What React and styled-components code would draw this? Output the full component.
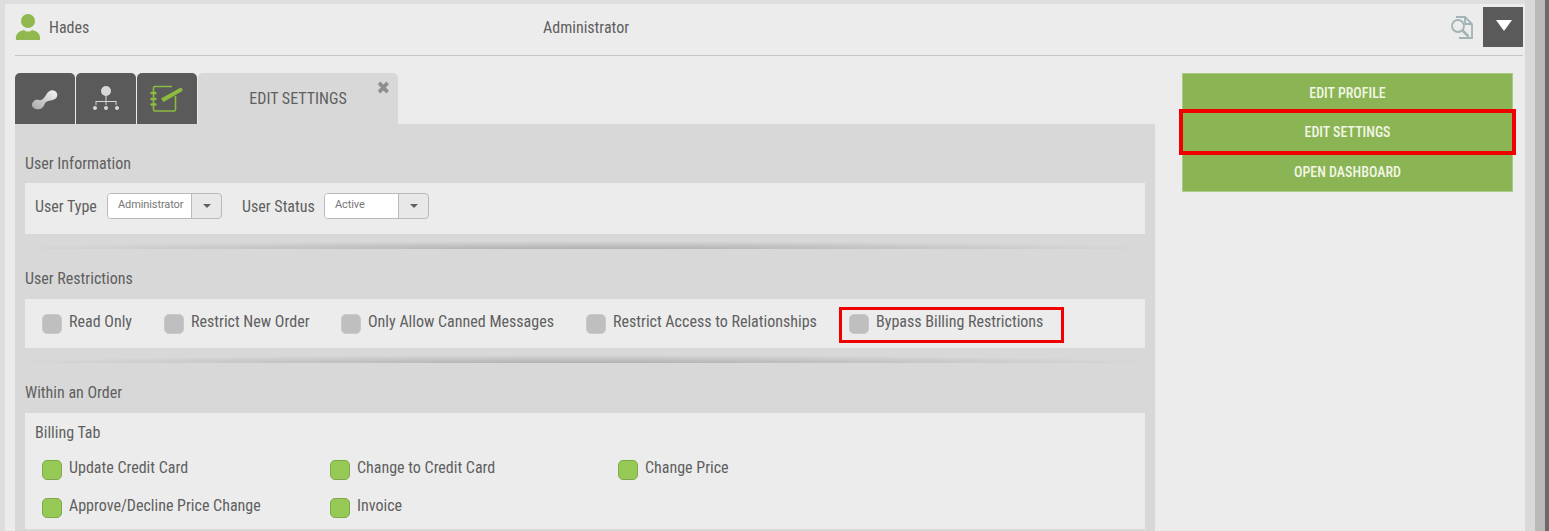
import React from 'react';
import styled, { createGlobalStyle } from 'styled-components';

const GlobalStyle = createGlobalStyle`
  html, body {
    margin: 0;
    padding: 0;
    height: 531px;
    overflow: hidden;
    background: #dedede;
  }
  * {
    box-sizing: border-box;
  }
`;

const Page = styled.div`
  width: 1549px;
  height: 531px;
  overflow: hidden;
  display: flex;
  padding-top: 4px;
  padding-left: 5px;
  background: #dedede;
  font-family: Roboto, "Liberation Sans", sans-serif;
  font-stretch: 75%;
  color: #5f5f5f;
`;

const Main = styled.div`
  width: 1520px;
  flex: none;
  padding: 0 10px;
  background: #ececec;
`;

const Gutter = styled.div`
  width: 10px;
  flex: none;
  background: #d9d9d9;
  margin-top: -4px;
`;

const Scrollbar = styled.div`
  flex: 1;
  margin-top: -4px;
  background: #6a6a6a;
  border-left: 10px solid #b9b9b9;
`;

const TopBar = styled.div`
  height: 52px;
  margin-right: -8px;
  padding-bottom: 6px;
  display: flex;
  align-items: center;
  border-bottom: 1px solid #c6c6c6;
`;

const UserName = styled.div`
  font-size: 16px;
  margin: 1px 0 0 8px;
  width: 494px;
`;

const Role = styled.div`
  font-size: 16px;
  margin-top: 1px;
  flex: 1;
`;

const DocIcon = styled.svg`
  width: 24px;
  height: 24px;
  margin-right: 9px;
  margin-top: 1px;
`;

const MenuButton = styled.div`
  width: 40px;
  height: 40px;
  background: #5a5a5a;
  display: flex;
  align-items: center;
  justify-content: center;
  padding-bottom: 2px;
`;

const Triangle = styled.div`
  width: 0;
  height: 0;
  margin-left: 2px;
  border-left: 8px solid transparent;
  border-right: 8px solid transparent;
  border-top: 11px solid #fff;
`;

const Columns = styled.div`
  display: flex;
  align-items: flex-start;
  padding-top: 17px;
`;

const Content = styled.div`
  width: 1140px;
  flex: none;
`;

const Tabs = styled.div`
  display: flex;
  height: 51px;
`;

const IconTab = styled.div`
  width: 60px;
  margin-right: 1px;
  background: #5a5a5a;
  border-radius: 5px 5px 0 0;
  display: flex;
  align-items: center;
  justify-content: center;
`;

const ActiveTab = styled.div`
  width: 200px;
  background: #d8d8d8;
  border-radius: 5px 5px 0 0;
  position: relative;
  display: flex;
  align-items: center;
  justify-content: center;
  font-size: 16px;
  padding-bottom: 1px;
`;

const CloseMark = styled.span`
  position: absolute;
  top: 5px;
  right: 8px;
  font-size: 18px;
  font-weight: 700;
  line-height: 20px;
  color: #8e8e8e;
  font-family: "DejaVu Sans", sans-serif;
`;

const Panel = styled.div`
  background: #d8d8d8;
  padding: 0 10px;
  height: 420px;
`;

const SectionTitle = styled.div`
  font-size: 16px;
  line-height: 18px;
  padding-top: ${({ top }) => top}px;
  padding-bottom: ${({ bottom }) => bottom || 11}px;
`;

const Card = styled.div`
  background: #ececec;
  height: ${({ h }) => h}px;
`;

const FieldRow = styled.div`
  height: 100%;
  display: flex;
  align-items: center;
  padding: 0 0 5px 10px;
  font-size: 16px;
`;

const Field = styled.div`
  display: flex;
  align-items: center;
  margin-right: 20px;
`;

const FieldLabel = styled.span`
  width: ${({ w }) => w}px;
  white-space: nowrap;
`;

const Select = styled.div`
  width: ${({ w }) => w}px;
  height: 26px;
  border: 1px solid #b9b9b9;
  border-radius: 4px;
  display: flex;
  background: #e8e8e8;
  overflow: hidden;
`;

const SelectValue = styled.div`
  flex: 1;
  background: #fff;
  border-right: 1px solid #b9b9b9;
  font-size: 11px;
  font-stretch: 100%;
  letter-spacing: -0.1px;
  line-height: 22px;
  padding-left: 10px;
  color: #777;
`;

const SelectArrow = styled.div`
  width: 29px;
  display: flex;
  align-items: center;
  justify-content: center;
  &::after {
    content: '';
    border-left: 4px solid transparent;
    border-right: 4px solid transparent;
    border-top: 4px solid #5f5f5f;
  }
`;

const Divider = styled.div`
  height: 15px;
  background: radial-gradient(ellipse 52% 8px at 50% 100%, #b0b0b0 0%, #c4c4c4 50%, rgba(216, 216, 216, 0) 100%);
`;

const CheckRow = styled.div`
  display: flex;
  align-items: center;
  height: 100%;
  padding-left: 17px;
`;

const Check = styled.label`
  display: flex;
  align-items: flex-start;
  font-size: 16px;
  line-height: 18px;
  position: relative;
  width: ${({ w }) => (w ? `${w}px` : 'auto')};
  white-space: nowrap;
`;

const Box = styled.span`
  width: 20px;
  height: 20px;
  flex: none;
  margin: 1px 7px 0 0;
  border-radius: 5px;
  background: ${({ on }) => (on ? '#97c957' : '#bfbfbf')};
  border: 1px solid ${({ on }) => (on ? '#7fa84a' : '#c9c9c9')};
`;

const Highlight = styled.div`
  position: absolute;
  top: -6px;
  left: -10px;
  width: 225px;
  height: 36px;
  border: 3px solid #f00000;
`;

const SubTitle = styled.div`
  font-size: 16px;
  line-height: 18px;
  padding: 11px 0 0 10px;
`;

const CheckGrid = styled.div`
  display: grid;
  grid-template-columns: 288px 288px 288px;
  grid-auto-rows: 38px;
  padding: 17px 0 0 17px;
`;

const Side = styled.div`
  margin-left: 27px;
  width: 331px;
  display: flex;
  flex-direction: column;
`;

const SideButton = styled.div`
  height: 39.67px;
  position: relative;
  display: flex;
  align-items: center;
  justify-content: center;
  background: #8bb554;
  border: 1px solid #a9cb85;
  border-top-width: ${({ joined }) => (joined ? 0 : 1)}px;
  color: #f1f6e6;
  font-size: 14px;
  font-weight: 500;
`;

const SideHighlight = styled.div`
  position: absolute;
  z-index: 1;
  top: -4px;
  left: -4px;
  right: -4px;
  bottom: -4px;
  border: 4px solid #f00000;
`;

function UserIcon() {
  return (
    <svg width="26" height="28" viewBox="0 0 26 28">
      <circle cx="13" cy="8" r="7" fill="#8fb84f" />
      <path d="M1 27c-1-7 4-9 8-10 2 2 6 2 8 0 4 1 9 3 8 10z" fill="#8fb84f" />
    </svg>
  );
}

function LinkIcon() {
  return (
    <svg width="30" height="24" viewBox="0 0 30 24">
      <defs>
        <linearGradient id="blob" x1="0" y1="1" x2="1" y2="0">
          <stop offset="0" stopColor="#a8a8a8" />
          <stop offset="1" stopColor="#f6f6f6" />
        </linearGradient>
      </defs>
      <path
        d="M2 18c0-4 4-6 7-5 3 1 5-2 7-5 2-4 6-6 9-4 3 2 3 6 0 8-3 2-6 1-9 3-2 2-2 6-6 7-4 1-8-1-8-4z"
        fill="url(#blob)"
      />
    </svg>
  );
}

function TreeIcon() {
  return (
    <svg width="28" height="28" viewBox="0 0 28 28" fill="#d8d8d8">
      <circle cx="14" cy="6" r="5" />
      <path d="M13.500 10h1v6h10v4h-1v-3h-9v3h-1v-3h-9v3h-1v-4h10z" />
      <circle cx="3" cy="23" r="2" />
      <circle cx="14" cy="23" r="2" />
      <circle cx="25" cy="23" r="2" />
    </svg>
  );
}

function NotebookIcon() {
  return (
    <svg width="34" height="28" viewBox="0 0 34 28" fill="none" stroke="#8cbc3f" strokeWidth="1.600">
      <path d="M22 1.500H5a1.500 1.500 0 0 0-1.500 1.500v21.500a1.500 1.500 0 0 0 1.500 1.500h19a1.500 1.500 0 0 0 1.500-1.500V11" />
      <path d="M1.500 8h4M1.500 14h4M1.500 19.500h4" strokeWidth="2.400" strokeLinecap="round" />
      <path d="M11 13.500l2.500 3.500 18-10.500c2-1.500 1-4-1.500-3.500z" fill="#8cbc3f" stroke="none" />
    </svg>
  );
}

function SearchDocIcon() {
  return (
    <DocIcon viewBox="0 0 24 24" fill="none" stroke="#a3b3b5" strokeWidth="1.800">
      <path d="M6 2h9l7 7v14H9" />
      <path d="M15 2v7h7" />
      <circle cx="8" cy="11" r="6" fill="#ececec" />
      <path d="M12.500 15.500l6 6" strokeWidth="2.600" />
    </DocIcon>
  );
}

function CheckItem({ on, label, w, children }) {
  return (
    <Check w={w}>
      <Box on={on} />
      {label}
      {children}
    </Check>
  );
}

const billing = [
  'Update Credit Card',
  'Change to Credit Card',
  'Change Price',
  'Approve/Decline Price Change',
  'Invoice',
];

export default function App() {
  return (
    <Page>
      <GlobalStyle />
      <Main>
        <TopBar>
          <UserIcon />
          <UserName>Hades</UserName>
          <Role>Administrator</Role>
          <SearchDocIcon />
          <MenuButton>
            <Triangle />
          </MenuButton>
        </TopBar>
        <Columns>
          <Content>
            <Tabs>
              <IconTab><LinkIcon /></IconTab>
              <IconTab><TreeIcon /></IconTab>
              <IconTab><NotebookIcon /></IconTab>
              <ActiveTab>
                EDIT SETTINGS
                <CloseMark>✖</CloseMark>
              </ActiveTab>
            </Tabs>
            <Panel>
              <SectionTitle top={31} bottom={10}>User Information</SectionTitle>
              <Card h={51}>
                <FieldRow>
                  <Field>
                    <FieldLabel w={72}>User Type</FieldLabel>
                    <Select w={115}>
                      <SelectValue>Administrator</SelectValue>
                      <SelectArrow />
                    </Select>
                  </Field>
                  <Field>
                    <FieldLabel w={82}>User Status</FieldLabel>
                    <Select w={105}>
                      <SelectValue>Active</SelectValue>
                      <SelectArrow />
                    </Select>
                  </Field>
                </FieldRow>
              </Card>
              <Divider />
              <SectionTitle top={21}>User Restrictions</SectionTitle>
              <Card h={49}>
                <CheckRow>
                  <CheckItem label="Read Only" w={122} />
                  <CheckItem label="Restrict New Order" w={177} />
                  <CheckItem label="Only Allow Canned Messages" w={245} />
                  <CheckItem label="Restrict Access to Relationships" w={263} />
                  <CheckItem label="Bypass Billing Restrictions">
                    <Highlight />
                  </CheckItem>
                </CheckRow>
              </Card>
              <Divider />
              <SectionTitle top={21}>Within an Order</SectionTitle>
              <Card h={116}>
                <SubTitle>Billing Tab</SubTitle>
                <CheckGrid>
                  {billing.map((label) => (
                    <CheckItem key={label} on label={label} />
                  ))}
                </CheckGrid>
              </Card>
            </Panel>
          </Content>
          <Side>
            <SideButton>EDIT PROFILE</SideButton>
            <SideButton joined>
              EDIT SETTINGS
              <SideHighlight />
            </SideButton>
            <SideButton joined>OPEN DASHBOARD</SideButton>
          </Side>
        </Columns>
      </Main>
      <Gutter />
      <Scrollbar />
    </Page>
  );
}
